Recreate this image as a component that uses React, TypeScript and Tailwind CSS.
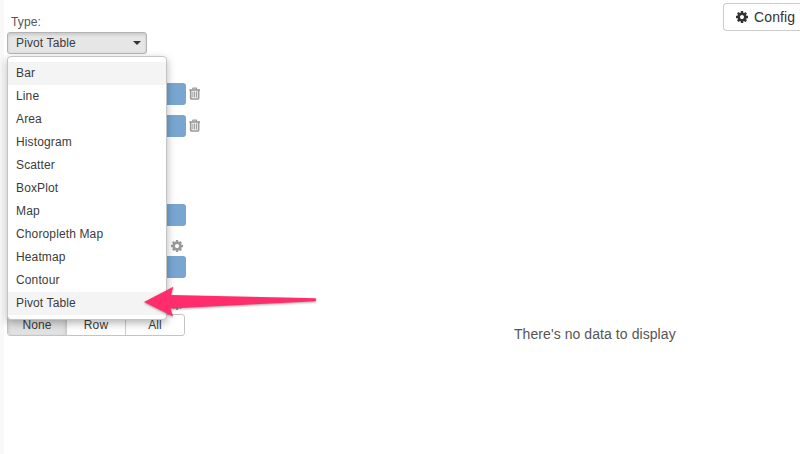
import type { ReactNode } from 'react';

const chartTypes = ['Bar', 'Line', 'Area', 'Histogram', 'Scatter', 'BoxPlot', 'Map', 'Choropleth Map', 'Heatmap', 'Contour', 'Pivot Table'];

function Cog({ className }: { className: string }) {
  return (
    <svg viewBox="0 128 1536 1536" className={className} fill="currentColor">
      <path d="M1024 896q0-106-75-181t-181-75-181 75-75 181 75 181 181 75 181-75 75-181zm512-109v222q0 12-8 23t-20 13l-185 28q-19 54-39 91 35 50 107 138 10 12 10 25t-9 23q-27 37-99 108t-94 71q-12 0-26-9l-138-108q-44 23-91 38-16 136-29 186-7 28-36 28h-222q-14 0-24.5-8.5t-11.5-21.5l-28-184q-49-16-90-37l-141 107q-10 9-25 9-14 0-25-11-126-114-165-168-7-10-7-23 0-12 8-23 15-21 51-66.5t54-70.5q-27-50-41-99l-183-27q-13-2-21-12.5t-8-23.5v-222q0-12 8-23t19-13l186-28q14-46 39-92-40-57-107-138-10-12-10-24 0-10 9-23 26-36 98.5-107.5t94.5-71.5q13 0 26 10l138 107q44-23 91-38 16-136 29-186 7-28 36-28h222q14 0 24.500 8.500t11.500 21.500l28 184q49 16 90 37l142-107q9-9 24-9 13 0 25 10 129 119 165 170 7 8 7 22 0 12-8 23-15 21-51 66.500t-54 70.500q26 50 41 98l183 28q13 2 21 12.500t8 23.500z" />
    </svg>
  );
}

function Trash() {
  return (
    <svg viewBox="0 0 12 13" className="mb-[2px] ml-[3px] h-[13px] w-[12px] text-[#999]" fill="none" stroke="currentColor">
      <path d="M0.300 3H11" strokeWidth="1.600" />
      <path d="M3.500 2.800L4 1.200H7.400L7.900 2.800" strokeWidth="1.200" />
      <path d="M1.700 3V11Q1.700 12 2.800 12H8.500Q9.600 12 9.600 11V3" strokeWidth="1.700" />
      <path d="M3.900 4.500V10.500M5.650 4.500V10.500M7.400 4.500V10.500" strokeWidth="1.050" />
    </svg>
  );
}

function Field({ className, children }: { className: string; children?: ReactNode }) {
  return (
    <div className={`flex h-[22px] shrink-0 items-center ${className}`}>
      <div className="flex h-[22px] w-[179px] overflow-hidden rounded-[3px]">
        <div className="w-[30px] border border-[#bbb] bg-[#eee]" />
        <div className="flex-1 bg-[#78a6d1]" />
      </div>
      {children}
    </div>
  );
}

function TypeMenu() {
  return (
    <ul className="absolute top-[24px] left-0 h-[264px] w-[160px] rounded-[4px] border border-[#c4c4c4] bg-white pt-[5px] shadow-[0_3px_8px_rgba(0,0,0,0.3)]">
      {chartTypes.map((name) => (
        <li
          key={name}
          className={`flex h-[23px] items-center pb-[2px] pl-[8px] ${name === 'Bar' || name === 'Pivot Table' ? 'bg-[#f4f4f4]' : ''}`}
        >
          {name}
        </li>
      ))}
    </ul>
  );
}

function PointerArrow() {
  return (
    <svg className="absolute top-[280px] left-[140px] z-20 h-[42px] w-[182px] drop-shadow-[0_1px_1px_rgba(0,0,0,0.35)]" viewBox="140 280 182 42">
      <path d="M144 302L173.300 286.800L171 295L315.500 298.300Q316.500 300 315.500 301.300L170.500 308.500L173 316.500Z" fill="#ff2d6b" />
    </svg>
  );
}

export default function App() {
  return (
    <div className="relative flex h-[454px] w-[800px] overflow-hidden bg-white font-['Liberation_Sans',Arial,sans-serif] text-[12px] tracking-[0.13px] text-[#3b3b3b]">
      <div className="w-[4px] shrink-0 bg-[#f8f8f8]" />
      <aside className="flex w-[210px] shrink-0 flex-col pt-[15px] pl-[3px]">
        <div className="h-[17px] pl-[4px] leading-[15px] text-[#555]">Type:</div>
        <div className="relative z-10 h-[22px] w-[140px]">
          <button className="flex h-[22px] w-[140px] items-center justify-between rounded-[3px] border border-[#b3b3b3] bg-[#e6e6e6] pr-[5px] pl-[8px] shadow-[inset_0_2px_3px_rgba(0,0,0,0.12)]">
            <span>Pivot Table</span>
            <span className="border-x-4 border-t-4 border-x-transparent border-t-[#333]" />
          </button>
          <TypeMenu />
        </div>
        <Field className="mt-[29px]"><Trash /></Field>
        <Field className="mt-[10px]"><Trash /></Field>
        <div className="mt-[10px] h-[22px] w-[80px] shrink-0 rounded-[3px] border border-[#bbb]" />
        <Field className="mt-[35px]" />
        <div className="flex h-[30px] shrink-0 items-center pt-[10px] pl-[164px]">
          <Cog className="h-[12px] w-[12px] text-[#999]" />
        </div>
        <Field className="" />
        <div className="flex h-[36px] shrink-0 items-end pb-[4px] pl-[164px]">
          <Cog className="h-[12px] w-[12px] text-[#999]" />
        </div>
        <div className="flex h-[22px] w-[178px] shrink-0 overflow-hidden rounded-[3px] border border-[#c4c4c4] text-center leading-[20px]">
          <button className="w-[59px] border-r border-[#ccc] bg-[#e2e2e2] shadow-[inset_0_2px_4px_rgba(0,0,0,0.15)]">None</button>
          <button className="w-[59px] border-r border-[#ccc]">Row</button>
          <button className="flex-1">All</button>
        </div>
      </aside>
      <main className="flex flex-1 flex-col">
        <div className="flex justify-end pt-[3px]">
          <button className="flex h-[28px] w-[77px] items-center rounded-l-[4px] border border-r-0 border-[#ccc] pl-[12px] text-[14px] text-[#333]">
            <Cog className="mr-[6px] h-[12px] w-[12px]" />
            Config
          </button>
        </div>
        <p className="mt-[295px] pl-[300px] text-[14px] leading-[16px] tracking-[0.07px] text-[#555]">There's no data to display</p>
      </main>
      <PointerArrow />
    </div>
  );
}
